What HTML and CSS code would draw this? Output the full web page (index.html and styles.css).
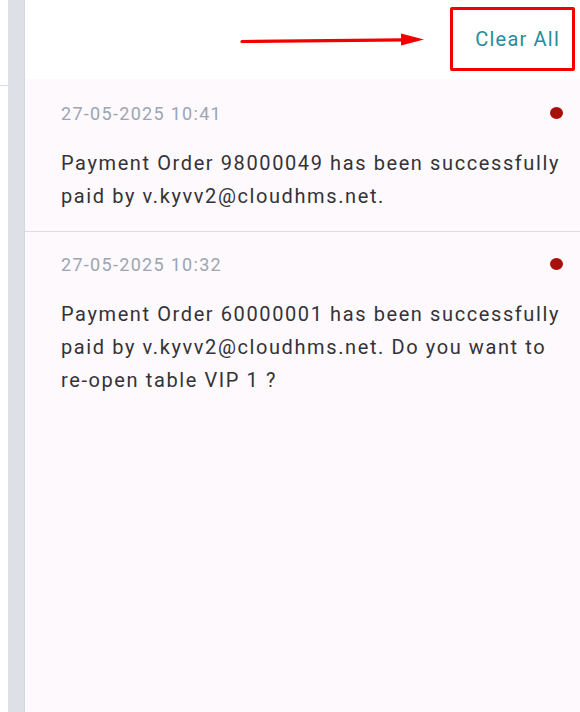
FILE: index.html
```html
<!DOCTYPE html>
<html lang="en">
<head>
    <meta charset="UTF-8">
    <meta name="viewport" content="width=device-width, initial-scale=1.0">
    <title>Notifications</title>
    <link rel="stylesheet" href="styles.css">
</head>
<body>
    <div class="page">
        <div class="edge">
            <div class="edge-line"></div>
        </div>
        <div class="rail"></div>
        <div class="panel">
            <div class="panel-header">
                <!-- annotation arrow -->
                <svg class="arrow" width="186" height="16" viewBox="0 0 186 16">
                    <path d="M2 9.5 L164 7.8" stroke="#f20000" stroke-width="3.2" stroke-linecap="round" fill="none"/>
                    <path d="M161 1.5 L184 7.6 L161 13.5 Z" fill="#f20000"/>
                </svg>
                <div class="clear-box">
                    <button class="clear-btn">Clear All</button>
                </div>
            </div>
            <div class="list">
                <div class="item">
                    <div class="item-top">
                        <span class="time">27-05-2025 10:41</span>
                        <span class="dot"></span>
                    </div>
                    <p class="msg">Payment Order 98000049 has been successfully paid by v.kyvv2@cloudhms.net.</p>
                </div>
                <div class="item">
                    <div class="item-top">
                        <span class="time">27-05-2025 10:32</span>
                        <span class="dot"></span>
                    </div>
                    <p class="msg">Payment Order 60000001 has been successfully paid by v.kyvv2@cloudhms.net. Do you want to re-open table VIP 1 ?</p>
                </div>
            </div>
        </div>
    </div>
</body>
</html>
```

FILE: styles.css
```css
html, body {
    margin: 0;
    height: 100%;
}
body {
    font-family: Roboto, "Liberation Sans", sans-serif;
    background-color: #fff;
}
.page {
    display: flex;
    height: 712px;
}
.edge {
    width: 8px;
    padding-top: 85px;
}
.edge-line {
    height: 1px;
    background-color: #dcd8e6;
}
.rail {
    width: 16px;
    background-color: #dde1e7;
    border-right: 1px solid #d4d8de;
}
.panel {
    flex: 1;
    display: flex;
    flex-direction: column;
}
.panel-header {
    height: 79px;
    display: flex;
    align-items: flex-start;
    justify-content: flex-end;
    padding: 7px 5px 0 0;
    box-sizing: border-box;
    background-color: #fff;
}
.arrow {
    margin: 25px 24px 0 0;
}
.clear-box {
    box-sizing: border-box;
    border: 3px solid #f20000;
    border-radius: 2px;
    width: 125px;
    height: 64px;
    display: flex;
    align-items: center;
    justify-content: flex-end;
    padding: 0 12px 1px 0;
}
.clear-btn {
    border: none;
    background: none;
    padding: 0;
    font-family: inherit;
    font-size: 20px;
    letter-spacing: 1.2px;
    color: #288c9c;
    cursor: pointer;
}
.list {
    flex: 1;
    background-color: #fdf9fd;
    padding-top: 2px;
}
.item {
    padding: 16px 6px 18px 36px;
    border-bottom: 1px solid #dedcdf;
}
.item:last-child {
    border-bottom: none;
}
.item-top {
    display: flex;
    align-items: center;
    justify-content: space-between;
    height: 32px;
}
.time {
    font-size: 18px;
    letter-spacing: 1.3px;
    color: #9ca5b2;
}
.dot {
    width: 13px;
    height: 12px;
    border-radius: 50%;
    background-color: #a8100b;
    margin-right: 11px;
}
.msg {
    margin: 18px 0 0;
    font-size: 20px;
    letter-spacing: 1.6px;
    line-height: 33px;
    color: #333338;
}
```
